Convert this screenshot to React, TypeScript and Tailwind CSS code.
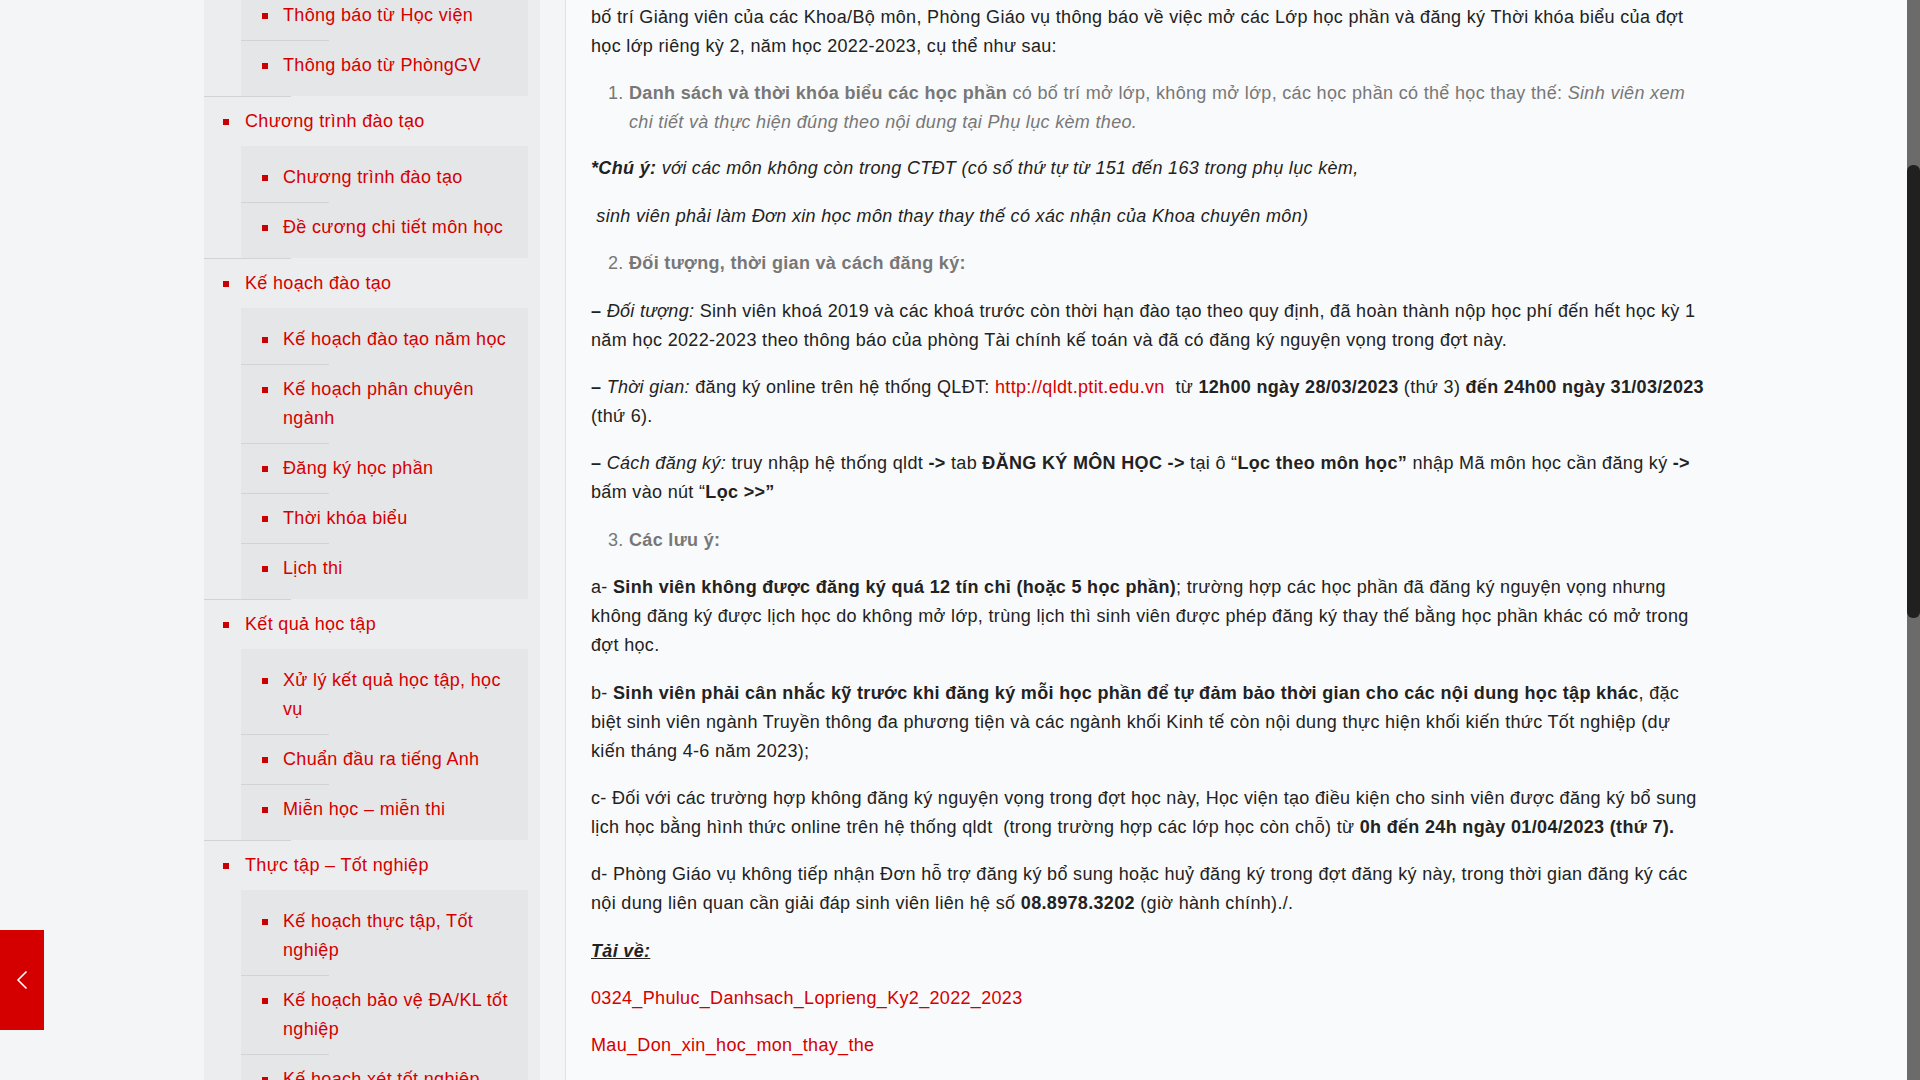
import React from "react";

const menu = [
  { label: "Thông báo", children: ["Thông báo từ Học viện", "Thông báo từ PhòngGV"] },
  { label: "Chương trình đào tạo", children: ["Chương trình đào tạo", "Đề cương chi tiết môn học"] },
  {
    label: "Kế hoạch đào tạo",
    children: [
      "Kế hoạch đào tạo năm học",
      "Kế hoạch phân chuyên ngành",
      "Đăng ký học phần",
      "Thời khóa biểu",
      "Lịch thi",
    ],
  },
  {
    label: "Kết quả học tập",
    children: ["Xử lý kết quả học tập, học vụ", "Chuẩn đầu ra tiếng Anh", "Miễn học – miễn thi"],
  },
  {
    label: "Thực tập – Tốt nghiệp",
    children: [
      "Kế hoạch thực tập, Tốt nghiệp",
      "Kế hoạch bảo vệ ĐA/KL tốt nghiệp",
      "Kế hoạch xét tốt nghiệp",
    ],
  },
];

function Bullet() {
  return <span className="mt-[12px] h-[6px] w-[6px] shrink-0 bg-[#cc0000]" />;
}

function Sidebar() {
  return (
    <div className="ml-[204px] mt-[-65px] w-[336px] self-start bg-[#ecedef]">
      {menu.map((group, gi) => (
        <div key={group.label}>
          {gi > 0 && <div className="h-px w-[87px] bg-[#d2d3d5]" />}
          <div className="flex items-start gap-[16px] pl-[19px] pt-[10px] pb-[10px]">
            <Bullet />
            <a className="text-[#d40000]">{group.label}</a>
          </div>
          <div className="ml-[37px] mr-[12px] bg-[#e5e6e8] pt-[7px] pb-[6px]">
            {group.children.map((child, ci) => (
              <div key={child}>
                {ci > 0 && <div className="h-px w-[88px] bg-[#d2d3d5]" />}
                <div className="flex items-start gap-[15px] pl-[21px] pr-[12px] pt-[10px] pb-[10px]">
                  <Bullet />
                  <a className="text-[#d40000]">{child}</a>
                </div>
              </div>
            ))}
          </div>
        </div>
      ))}
    </div>
  );
}

function Content() {
  return (
    <div className="ml-[25px] flex-1 self-stretch border-l border-[#e1e2e4] bg-[#f9fafb] pl-[25px] pt-[3px]">
      <div className="w-[1117px] text-[#222222] [&_p]:mb-[18.4px]">
        <p>
          bố trí Giảng viên của các Khoa/Bộ môn, Phòng Giáo vụ thông báo về việc mở các Lớp học phần và đăng
          ký Thời khóa biểu của đợt học lớp riêng kỳ 2, năm học 2022-2023, cụ thể như sau:
        </p>
        <ol className="mb-[17px] list-decimal pl-[38px] text-[#777777]">
          <li>
            <b>Danh sách và thời khóa biểu các học phần</b> có bố trí mở lớp, không mở lớp, các học phần có thể
            học thay thế: <i>Sinh viên xem chi tiết và thực hiện đúng theo nội dung tại Phụ lục kèm theo.</i>
          </li>
        </ol>
        <p className="italic">
          <b>*Chú ý:</b> với các môn không còn trong CTĐT (có số thứ tự từ 151 đến 163 trong phụ lục kèm,
        </p>
        <p className="italic">
          {"\u00a0"}sinh viên phải làm Đơn xin học môn thay thay thế có xác nhận của Khoa chuyên môn)
        </p>
        <ol start={2} className="mb-[18.4px] list-decimal pl-[38px] text-[#777777]">
          <li>
            <b>Đối tượng, thời gian và cách đăng ký:</b>
          </li>
        </ol>
        <p>
          <b>–</b> <i>Đối tượng:</i> Sinh viên khoá 2019 và các khoá trước còn thời hạn đào tạo theo quy định,
          đã hoàn thành nộp học phí đến hết học kỳ 1 năm học 2022-2023 theo thông báo của phòng Tài chính kế
          toán và đã có đăng ký nguyện vọng trong đợt này.
        </p>
        <p>
          <b>–</b> <i>Thời gian:</i> đăng ký online trên hệ thống QLĐT:{" "}
          <a className="text-[#d40000]">http://qldt.ptit.edu.vn</a>
          {"\u00a0 "}từ <b>12h00 ngày 28/03/2023</b> (thứ 3) <b>đến 24h00 ngày 31/03/2023</b> (thứ 6).
        </p>
        <p>
          <b>–</b> <i>Cách đăng ký:</i> truy nhập hệ thống qldt <b>-&gt;</b> tab <b>ĐĂNG KÝ MÔN HỌC</b>{" "}
          <b>-&gt;</b> tại ô “<b>Lọc theo môn học”</b> nhập Mã môn học cần đăng ký <b>-&gt;</b> bấm vào nút “
          <b>Lọc &gt;&gt;”</b>
        </p>
        <ol start={3} className="mb-[18.4px] list-decimal pl-[38px] text-[#777777]">
          <li>
            <b>Các lưu ý:</b>
          </li>
        </ol>
        <p>
          a- <b>Sinh viên không được đăng ký quá 12 tín chỉ (hoặc 5 học phần)</b>; trường hợp các học phần đã
          đăng ký nguyện vọng nhưng không đăng ký được lịch học do không mở lớp, trùng lịch thì sinh viên được
          phép đăng ký thay thế bằng học phần khác có mở trong đợt học.
        </p>
        <p>
          b-{" "}
          <b>
            Sinh viên phải cân nhắc kỹ trước khi đăng ký mỗi học phần để tự đảm bảo thời gian cho các nội dung
            học tập khác
          </b>
          , đặc biệt sinh viên ngành Truyền thông đa phương tiện và các ngành khối Kinh tế còn nội dung thực
          hiện khối kiến thức Tốt nghiệp (dự kiến tháng 4-6 năm 2023);
        </p>
        <p>
          c- Đối với các trường hợp không đăng ký nguyện vọng trong đợt học này, Học viện tạo điều kiện cho
          sinh viên được đăng ký bổ sung lịch học bằng hình thức online trên hệ thống qldt{"\u00a0 "}(trong
          trường hợp các lớp học còn chỗ) từ <b>0h đến 24h ngày 01/04/2023 (thứ 7).</b>
        </p>
        <p>
          d- Phòng Giáo vụ không tiếp nhận Đơn hỗ trợ đăng ký bổ sung hoặc huỷ đăng ký trong đợt đăng ký này,
          trong thời gian đăng ký các nội dung liên quan cần giải đáp sinh viên liên hệ số{" "}
          <b>08.8978.3202</b> (giờ hành chính)./.
        </p>
        <p>
          <u>
            <b>
              <i>Tải về:</i>
            </b>
          </u>
        </p>
        <p>
          <a className="text-[#d40000]">0324_Phuluc_Danhsach_Loprieng_Ky2_2022_2023</a>
        </p>
        <p>
          <a className="text-[#d40000]">Mau_Don_xin_hoc_mon_thay_the</a>
        </p>
      </div>
    </div>
  );
}

export default function App() {
  return (
    <div className="relative flex h-screen overflow-hidden bg-[#f4f5f7] font-['Liberation_Sans',Arial,sans-serif] text-[18px] leading-[29px] tracking-[0.33px]">
      <Sidebar />
      <Content />

      {/* scrollbar */}
      <div className="w-[13px] shrink-0 self-stretch bg-[#6b6b6b]">
        <div className="mt-[165px] h-[453px] rounded-[6px] bg-[#202020]" />
      </div>

      {/* prev post button */}
      <a className="absolute left-0 top-[930px] flex h-[100px] w-[44px] items-center justify-center bg-[#d40000]">
        <svg width="12" height="20" viewBox="0 0 12 20" fill="none">
          <path d="M10.5 1.5 2 10l8.5 8.5" stroke="white" strokeWidth="1.6" />
        </svg>
      </a>
    </div>
  );
}
